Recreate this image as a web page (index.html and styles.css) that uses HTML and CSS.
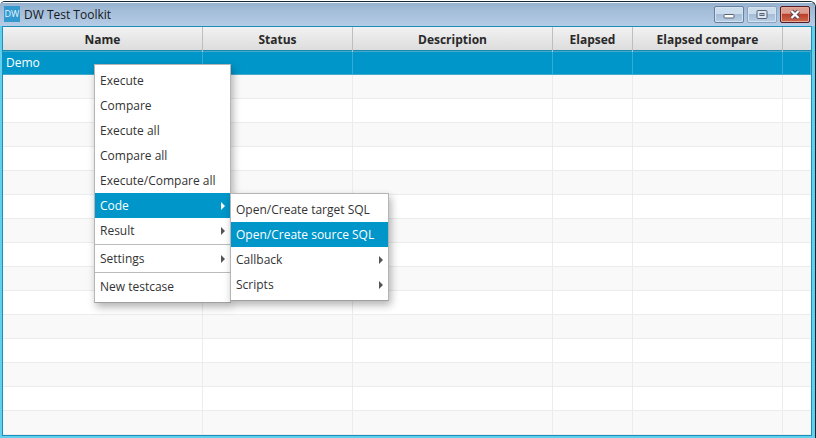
FILE: index.html
```
<!DOCTYPE html>
<html lang="en">
<head>
<meta charset="utf-8">
<title>DW Test Toolkit</title>
<link rel="stylesheet" href="styles.css">
</head>
<body>
<div class="window">
  <header class="titlebar">
    <span class="logo">DW</span>
    <h1 class="title">DW Test Toolkit</h1>
    <div class="controls">
      <span class="control"><svg width="30" height="16" viewBox="0 0 30 16"><rect x="10" y="8.500" width="10" height="3.500" rx="1" fill="#fff" stroke="#596273"/></svg></span>
      <span class="control control-max"><svg width="30" height="16" viewBox="0 0 30 16"><rect x="10" y="4.500" width="10" height="8" rx="1" fill="#dce7f3" stroke="#596273"/><rect x="13" y="7.500" width="4" height="2" fill="#b0c5dc" stroke="#596273"/></svg></span>
      <span class="control control-close"><svg width="30" height="16" viewBox="0 0 30 16"><path d="M11.500 5l7 7M18.500 5l-7 7" stroke="#5d4350" stroke-width="4.200"/><path d="M11.500 5l7 7M18.500 5l-7 7" stroke="#fff" stroke-width="2.300"/></svg></span>
    </div>
  </header>
  <main class="table">
    <div class="row head"><span>Name</span><span>Status</span><span>Description</span><span>Elapsed</span><span>Elapsed compare</span><span></span></div>
    <div class="row selected"><span>Demo</span><span></span><span></span><span></span><span></span><span></span></div>
    <div class="row"><span></span><span></span><span></span><span></span><span></span><span></span></div>
    <div class="row"><span></span><span></span><span></span><span></span><span></span><span></span></div>
    <div class="row"><span></span><span></span><span></span><span></span><span></span><span></span></div>
    <div class="row"><span></span><span></span><span></span><span></span><span></span><span></span></div>
    <div class="row"><span></span><span></span><span></span><span></span><span></span><span></span></div>
    <div class="row"><span></span><span></span><span></span><span></span><span></span><span></span></div>
    <div class="row"><span></span><span></span><span></span><span></span><span></span><span></span></div>
    <div class="row"><span></span><span></span><span></span><span></span><span></span><span></span></div>
    <div class="row"><span></span><span></span><span></span><span></span><span></span><span></span></div>
    <div class="row"><span></span><span></span><span></span><span></span><span></span><span></span></div>
    <div class="row"><span></span><span></span><span></span><span></span><span></span><span></span></div>
    <div class="row"><span></span><span></span><span></span><span></span><span></span><span></span></div>
    <div class="row"><span></span><span></span><span></span><span></span><span></span><span></span></div>
    <div class="row"><span></span><span></span><span></span><span></span><span></span><span></span></div>
    <div class="row"><span></span><span></span><span></span><span></span><span></span><span></span></div>
  </main>
</div>
<nav class="menu context">
  <div class="item">Execute</div>
  <div class="item">Compare</div>
  <div class="item">Execute all</div>
  <div class="item">Compare all</div>
  <div class="item">Execute/Compare all</div>
  <div class="item parent active">Code</div>
  <div class="item parent">Result</div>
  <hr>
  <div class="item parent">Settings</div>
  <hr>
  <div class="item">New testcase</div>
</nav>
<nav class="menu submenu">
  <div class="item">Open/Create target SQL</div>
  <div class="item active">Open/Create source SQL</div>
  <div class="item parent">Callback</div>
  <div class="item parent">Scripts</div>
</nav>
</body>
</html>
```
FILE: styles.css
```
* { box-sizing: border-box; }
body {
  margin: 0;
  width: 816px;
  height: 438px;
  overflow: hidden;
  background: #fff;
  font: 12px "Open Sans", "Noto Sans", sans-serif;
  color: #333;
}
.window {
  height: 438px;
  margin-top: 1px;
  padding: 0 2px 0 1px;
  border: solid #17262e;
  border-width: 1px 1px 0 0;
  border-radius: 5px 6px 0 0;
  background: #5fd0ee;
  box-shadow: inset 0 1px #f1f6fa;
  overflow: hidden;
}
.titlebar {
  display: flex;
  align-items: flex-start;
  height: 24px;
  margin: 0 -2px 0 -1px;
  padding: 4px 5px 0 4px;
  background: linear-gradient(#f2f7fb 0 1px, #96b1cd 1px, #a3bcd8 35%, #b5cce6);
}
.logo {
  width: 16px;
  height: 16px;
  background: #3399cf;
  color: #e6f5fc;
  font-size: 9px;
  line-height: 15px;
  text-align: center;
}
.title {
  margin: 0 0 0 4px;
  font-size: 12px;
  font-weight: 400;
  line-height: 17px;
  color: #151a20;
}
.controls { display: flex; gap: 3px; margin-left: auto; }
.control {
  width: 30px;
  height: 17px;
  border: 1px solid #667f9d;
  border-radius: 2px;
  background: linear-gradient(#cbdced 0 45%, #a5bdd8 50%, #b9cee5);
  box-shadow: inset 0 0 0 1px #d5e3f1;
}
.control svg { display: block; margin: -1px; }
.control-max { border-color: #8ba3c0; }
.control-close {
  border-color: #571c23;
  background: linear-gradient(#dd9d90 0 42%, #bb3f2b 48%, #cd684b);
  box-shadow: inset 0 0 0 1px #e5a99c;
}
.table {
  width: 810px;
  height: 410px;
  margin-left: 1px;
  border: 1px solid #1a8fb9;
  background: #fff;
  overflow: hidden;
}
.row {
  display: grid;
  grid-template-columns: 200px 150px 200px 80px 150px 1fr;
  height: 24px;
  border-bottom: 1px solid #ececec;
  background: #fff;
}
.row:nth-child(odd) { background: #f9f9f9; }
.row span { border-right: 1px solid #ececec; }
.row span:last-child { border-right: 0; }
.row.head {
  background: linear-gradient(#f2f2f2, #dcdcdc);
  border-bottom: 0;
  font-weight: 700;
  line-height: 25px;
  text-align: center;
  color: #292929;
}
.row.head span { border-color: #bebebe; }
.row.selected {
  background: #0096c9;
  border: solid #43aaca;
  border-width: 1px 1px 1px 0;
  box-shadow: 0 -1px #168aae, 0 1px #168aae;
  color: #fff;
  line-height: 22px;
}
.row.selected span { border-color: #32acd5; }
.row.selected span:first-child { padding-left: 3px; }
.menu {
  position: absolute;
  border: 1px solid #b5b5b5;
  border-bottom-color: #a0a0a0;
  background: #fff;
  box-shadow: 2px 4px 8px rgba(0, 0, 0, .3);
}
.context { left: 94px; top: 64px; width: 137px; height: 239px; padding-top: 3px; }
.submenu { left: 230px; top: 193px; width: 159px; height: 108px; padding-top: 3px; }
.item {
  display: flex;
  align-items: center;
  justify-content: space-between;
  height: 25px;
  padding: 0 5px;
  white-space: nowrap;
}
.active { background: #0096c9; color: #fff; }
.parent::after {
  content: "";
  border: solid transparent;
  border-width: 4px 0 4px 4px;
  border-left-color: #555;
}
.parent.active::after { border-left-color: #fff; }
.menu hr {
  height: 1px;
  margin: 1px 0;
  border: 0;
  background: #bbb;
}
```
